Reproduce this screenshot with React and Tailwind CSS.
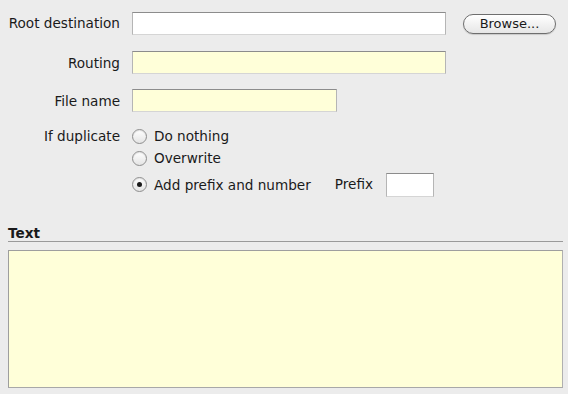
import React from 'react';

const field = 'h-[23px] bg-[#ffffd9] border border-[#b5b5b5] border-t-[#8c8c8c] border-b-[#d5d5d5]';

function Radio({ checked, label }) {
  return (
    <div className="flex items-center gap-[7px] h-[16px]">
      <span className="w-[15px] h-[15px] rounded-full border border-[#8e8e8e] bg-gradient-to-b from-[#ffffff] to-[#e4e4e4] flex items-center justify-center shadow-[inset_0_1px_1px_rgba(0,0,0,0.12)]">
        {checked && <span className="w-[5px] h-[5px] rounded-full bg-[#1a1a1a]" />}
      </span>
      <span className="pt-[2px]">{label}</span>
    </div>
  );
}

export default function App() {
  return (
    <div className="w-[568px] h-[394px] bg-[#ececec] text-[13.6px] text-[#1a1a1a] leading-none font-['DejaVu_Sans',sans-serif] overflow-hidden">
      <div className="grid grid-cols-[112px_1fr] gap-x-[12px] pl-[8px] pt-[12px]">
        <div className="text-right self-center whitespace-nowrap">Root destination</div>
        <div className="flex items-center">
          <div className="w-[314px] h-[23px] bg-white border border-[#b5b5b5] border-t-[#8c8c8c] border-b-[#d5d5d5]" />
          <button className="ml-[17px] w-[93px] h-[20px] rounded-full border border-[#6e6e6e] bg-gradient-to-b from-[#ffffff] to-[#e6e6e6] text-[13px] shadow-[0_1px_1px_rgba(0,0,0,0.15)]">
            Browse...
          </button>
        </div>

        <div className="text-right self-center mt-[16px] pt-[2px]">Routing</div>
        <div className={`${field} w-[314px] mt-[16px]`} />

        <div className="text-right self-center mt-[15px] pt-[2px]">File name</div>
        <div className={`${field} w-[205px] mt-[15px]`} />

        <div className="text-right mt-[18px]">If duplicate</div>
        <div className="flex flex-col gap-[6px] mt-[16px]">
          <Radio label="Do nothing" />
          <Radio label="Overwrite" />
          <div className="flex items-center">
            <Radio checked label="Add prefix and number" />
            <span className="ml-[24px] pt-[1px]">Prefix</span>
            <div className="ml-[13px] mt-[1px] w-[48px] h-[24px] bg-white border border-[#b5b5b5] border-t-[#8c8c8c] border-b-[#d5d5d5]" />
          </div>
        </div>
      </div>

      <div className="mx-[8px] mt-[30px] mr-[5px]">
        <div className="font-bold pb-0 border-b border-[#9a9a9a]">Text</div>
        <div className="mt-[8px] h-[138px] bg-[#ffffd9] border border-[#9e9e9e] border-r-[#b0b0b0] border-b-[#a8a8a8]" />
      </div>
    </div>
  );
}
